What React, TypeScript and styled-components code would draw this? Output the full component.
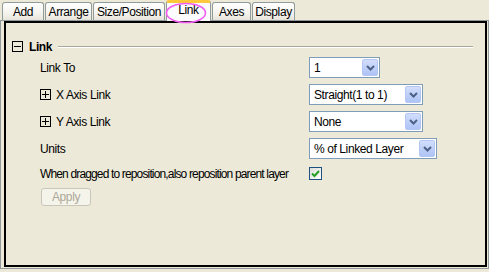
import styled, { createGlobalStyle } from 'styled-components'

const GlobalStyle = createGlobalStyle`
  html, body {
    margin: 0;
    padding: 0;
    background: #ECE9D8;
  }
  body {
    font-family: "Liberation Sans", Arial, sans-serif;
    font-size: 12px;
    letter-spacing: -0.4px;
    color: #000;
  }
`

const Window = styled.div`
  position: relative;
  width: 489px;
  height: 272px;
  background: #ECE9D8;
  overflow: hidden;
`

const TabStrip = styled.div`
  display: flex;
  align-items: flex-end;
  gap: 1px;
  height: 20px;
  padding-left: 2px;
  position: relative;
  z-index: 1;
`

const Tab = styled.div<{ $w: number; $active?: boolean }>`
  box-sizing: border-box;
  width: ${p => p.$w}px;
  height: ${p => (p.$active ? 21 : 18)}px;
  margin-bottom: ${p => (p.$active ? -1 : 0)}px;
  border: 1px solid #919B9C;
  border-bottom: none;
  border-top: ${p => (p.$active ? '3px solid #FFC83C' : '1px solid #919B9C')};
  border-radius: 3px 3px 0 0;
  background: ${p => (p.$active ? '#FCFCFE' : 'linear-gradient(#FFFFFF, #F4F3EE 60%, #E6E4DA)')};
  display: flex;
  align-items: center;
  justify-content: center;
  padding-bottom: ${p => (p.$active ? 5 : 0)}px;
  white-space: nowrap;
`

const Annotation = styled.svg`
  position: absolute;
  left: 165px;
  top: 2px;
  z-index: 2;
  pointer-events: none;
`

const Panel = styled.div`
  box-sizing: border-box;
  height: 249px;
  border: 1px solid #919B9C;
  padding: 0 1px 1px 3px;
`

const Frame = styled.div`
  box-sizing: border-box;
  height: 100%;
  border: 2px solid #000;
  padding: 18px 12px 0 6px;
`

const SectionHeader = styled.div`
  display: flex;
  align-items: center;
  gap: 6px;
  height: 11px;
  font-weight: bold;
`

const HeaderRule = styled.div`
  flex: 1;
  border-top: 1px solid #ACA899;
  border-bottom: 1px solid #FFFFFF;
  margin-top: 1px;
`

const ToggleBox = styled.span<{ $open?: boolean }>`
  position: relative;
  box-sizing: border-box;
  flex: none;
  width: 11px;
  height: 11px;
  border: 1px solid #000;

  &::before {
    content: '';
    position: absolute;
    left: 1px;
    right: 1px;
    top: 4px;
    height: 1px;
    background: #000;
  }

  &::after {
    content: '';
    display: ${p => (p.$open ? 'none' : 'block')};
    position: absolute;
    top: 1px;
    bottom: 1px;
    left: 4px;
    width: 1px;
    background: #000;
  }
`

const Grid = styled.div`
  display: grid;
  grid-template-columns: 269px auto;
  grid-template-rows: repeat(4, 21px) 17px 18px;
  row-gap: 6px;
  margin: 5px 0 0 28px;
`

const Label = styled.div<{ $tight?: boolean }>`
  display: flex;
  align-items: center;
  gap: 5px;
  white-space: nowrap;
  letter-spacing: ${p => (p.$tight ? '-0.85px' : 'inherit')};
`

const Control = styled.div`
  display: flex;
  align-items: center;
`

const Select = styled.div<{ $w: number }>`
  box-sizing: border-box;
  width: ${p => p.$w}px;
  height: 21px;
  border: 1px solid #7F9DB9;
  background: #FFFFFF;
  display: flex;
  align-items: center;
  padding: 1px 1px 1px 4px;
`

const SelectText = styled.span`
  flex: 1;
  white-space: nowrap;
`

const DropButton = styled.span`
  box-sizing: border-box;
  width: 16px;
  height: 17px;
  border: 1px solid #B4C7F4;
  border-radius: 2px;
  background: linear-gradient(#D3DEFB, #BBCDF8 60%, #AFC4F5);
  display: flex;
  align-items: center;
  justify-content: center;
`

const CheckBox = styled.span`
  box-sizing: border-box;
  width: 13px;
  height: 13px;
  border: 1px solid #1C5180;
  background: linear-gradient(135deg, #DCDCD7, #FFFFFF);
  display: flex;
  align-items: center;
  justify-content: center;
`

const ApplyButton = styled.button`
  grid-column: 1 / span 2;
  justify-self: start;
  box-sizing: border-box;
  width: 50px;
  height: 18px;
  margin: 0 0 0 1px;
  padding: 0;
  border: 1px solid #C9C7BA;
  border-radius: 3px;
  background: #F5F4EA;
  color: #ACA899;
  font: inherit;
  letter-spacing: inherit;
`

const Chevron = () => (
  <svg width="9" height="6" viewBox="0 0 9 6">
    <path d="M1 1 L4.5 4.5 L8 1" fill="none" stroke="#4D6185" strokeWidth="2" />
  </svg>
)

const Dropdown = ({ value, width }: { value: string; width: number }) => (
  <Select $w={width}>
    <SelectText>{value}</SelectText>
    <DropButton>
      <Chevron />
    </DropButton>
  </Select>
)

const tabs = [
  { name: 'Add', w: 42 },
  { name: 'Arrange', w: 47 },
  { name: 'Size/Position', w: 72 },
  { name: 'Link', w: 45, active: true },
  { name: 'Axes', w: 39 },
  { name: 'Display', w: 43 },
]

export default function App() {
  return (
    <Window>
      <GlobalStyle />
      <TabStrip>
        {tabs.map(t => (
          <Tab key={t.name} $w={t.w} $active={t.active}>
            {t.name}
          </Tab>
        ))}
      </TabStrip>
      <Annotation width="44" height="23" viewBox="0 0 44 23">
        <ellipse cx="21" cy="11" rx="19.5" ry="9.5" fill="none" stroke="#F25CF2" strokeWidth="1.6" />
      </Annotation>

      <Panel>
        <Frame>
          <SectionHeader>
            <ToggleBox $open />
            <span>Link</span>
            <HeaderRule />
          </SectionHeader>

          <Grid>
            <Label>Link To</Label>
            <Control>
              <Dropdown value="1" width={71} />
            </Control>

            <Label>
              <ToggleBox />
              X Axis Link
            </Label>
            <Control>
              <Dropdown value="Straight(1 to 1)" width={114} />
            </Control>

            <Label>
              <ToggleBox />
              Y Axis Link
            </Label>
            <Control>
              <Dropdown value="None" width={114} />
            </Control>

            <Label>Units</Label>
            <Control>
              <Dropdown value="% of Linked Layer" width={128} />
            </Control>

            <Label $tight>When dragged to reposition,also reposition parent layer</Label>
            <Control>
              <CheckBox>
                <svg width="9" height="9" viewBox="0 0 9 9">
                  <path d="M1 4.5 L3.5 7 L8 2" fill="none" stroke="#21A121" strokeWidth="2" />
                </svg>
              </CheckBox>
            </Control>

            <ApplyButton disabled>Apply</ApplyButton>
          </Grid>
        </Frame>
      </Panel>
    </Window>
  )
}
